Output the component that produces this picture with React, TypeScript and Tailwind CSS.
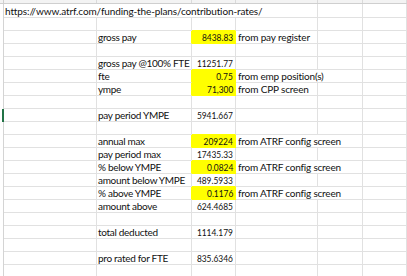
type Row = {
    label?: string;
    value?: string;
    note?: string;
    yellow?: boolean;
    wide?: boolean;
};

const rows: Row[] = [
    {},
    { label: "gross pay", value: "8438.83", note: "from pay register", yellow: true },
    {},
    { label: "gross pay @100% FTE", value: "11251.77" },
    { label: "fte", value: "0.75", note: "from emp position(s)", yellow: true, wide: true },
    { label: "ympe", value: "71,300", note: "from CPP screen", yellow: true },
    {},
    { label: "pay period YMPE", value: "5941.667" },
    {},
    { label: "annual max", value: "209224", note: "from ATRF config screen", yellow: true, wide: true },
    { label: "pay period max", value: "17435.33" },
    { label: "% below YMPE", value: "0.0824", note: "from ATRF config screen", yellow: true, wide: true },
    { label: "amount below YMPE", value: "489.5933" },
    { label: "% above YMPE", value: "0.1176", note: "from ATRF config screen", yellow: true, wide: true },
    { label: "amount above", value: "624.4685" },
    {},
    { label: "total deducted", value: "1114.179" },
    {},
    { label: "pro rated for FTE", value: "835.6346" },
    {},
    {},
];

// column header strip, scrolled so only its bottom edge shows
const HeaderStrip = (): JSX.Element => {
    const widths = ["w-[93px]", "w-[95px]", "w-[44px]", "w-[82px]", "w-[45px]", "w-[44px]"];
    return (
        <div className="flex h-[4px] bg-[#f3f3f3] border-b border-[#cfcfcf] overflow-hidden">
            <div className="w-[4px] shrink-0 border-r border-[#cfcfcf]" />
            {widths.map((w, i) => (
                <div key={i} className={`${w} shrink-0 border-r border-[#dadada]`} />
            ))}
        </div>
    );
};

const SheetRow = ({ row, index, nextYellow }: { row: Row; index: number; nextYellow: boolean }): JSX.Element => {
    const grid = "border-[#e1e1e1]";
    const active = index === 8;
    const yellow = row.yellow;
    const cBorder = yellow || nextYellow ? "border-b-[#ffff00]" : "";

    return (
        <div className="flex h-[13px]">
            <div className="w-[4px] shrink-0 flex justify-end">
                <div className={active ? "w-[2px] h-full bg-[#217346]" : "w-px h-full bg-[#d4d4d4]"} />
            </div>
            <div className={`w-[93px] shrink-0 border-r border-b ${grid}`} />
            <div className={`w-[95px] shrink-0 border-r border-b ${grid} ${yellow ? "border-r-[#ffff00]" : ""} flex items-end pl-px whitespace-nowrap`}>
                {row.label && <span className="leading-[12px] tracking-[-0.3px]">{row.label}</span>}
            </div>
            <div className={`w-[44px] shrink-0 border-r border-b ${grid} ${cBorder} ${yellow ? "bg-[#ffff00] border-r-[#ffff00]" : ""} flex items-end justify-end pr-[2px] whitespace-nowrap`}>
                {row.value && <span className="inline-block leading-[12px] tracking-normal origin-right scale-x-[0.84]">{row.value}</span>}
            </div>
            {row.wide ? (
                <div className={`w-[127px] shrink-0 border-r border-b ${grid} flex items-end pl-[2px] whitespace-nowrap`}>
                    <span className="leading-[12px] tracking-[-0.2px]">{row.note}</span>
                </div>
            ) : (
                <>
                    <div className={`w-[82px] shrink-0 border-r border-b ${grid} flex items-end pl-[2px] whitespace-nowrap`}>
                        {row.note && <span className="leading-[12px] tracking-[-0.15px]">{row.note}</span>}
                    </div>
                    <div className={`w-[45px] shrink-0 border-r border-b ${grid}`} />
                </>
            )}
            <div className={`w-[44px] shrink-0 border-r border-b ${grid}`} />
        </div>
    );
};

export default function App() {
    return (
        <div className="w-[407px] h-[276px] overflow-hidden bg-white text-[#111] text-[10px] font-['Lato',_sans-serif]">
            <HeaderStrip />
            <div className="flex h-[14px]">
                <div className="w-[4px] shrink-0 flex justify-end">
                    <div className="w-px h-full bg-[#d4d4d4]" />
                </div>
                <div className="w-[314px] shrink-0 border-r border-b border-[#e1e1e1] flex items-end pl-px whitespace-nowrap">
                    <span className="leading-[12px] tracking-[-0.12px]">https://www.atrf.com/funding-the-plans/contribution-rates/</span>
                </div>
                <div className="w-[45px] shrink-0 border-r border-b border-[#e1e1e1]" />
                <div className="w-[44px] shrink-0 border-r border-b border-[#e1e1e1]" />
            </div>
            {rows.map((row, i) => (
                <SheetRow key={i} row={row} index={i + 1} nextYellow={!!rows[i + 1]?.yellow} />
            ))}
        </div>
    );
}
